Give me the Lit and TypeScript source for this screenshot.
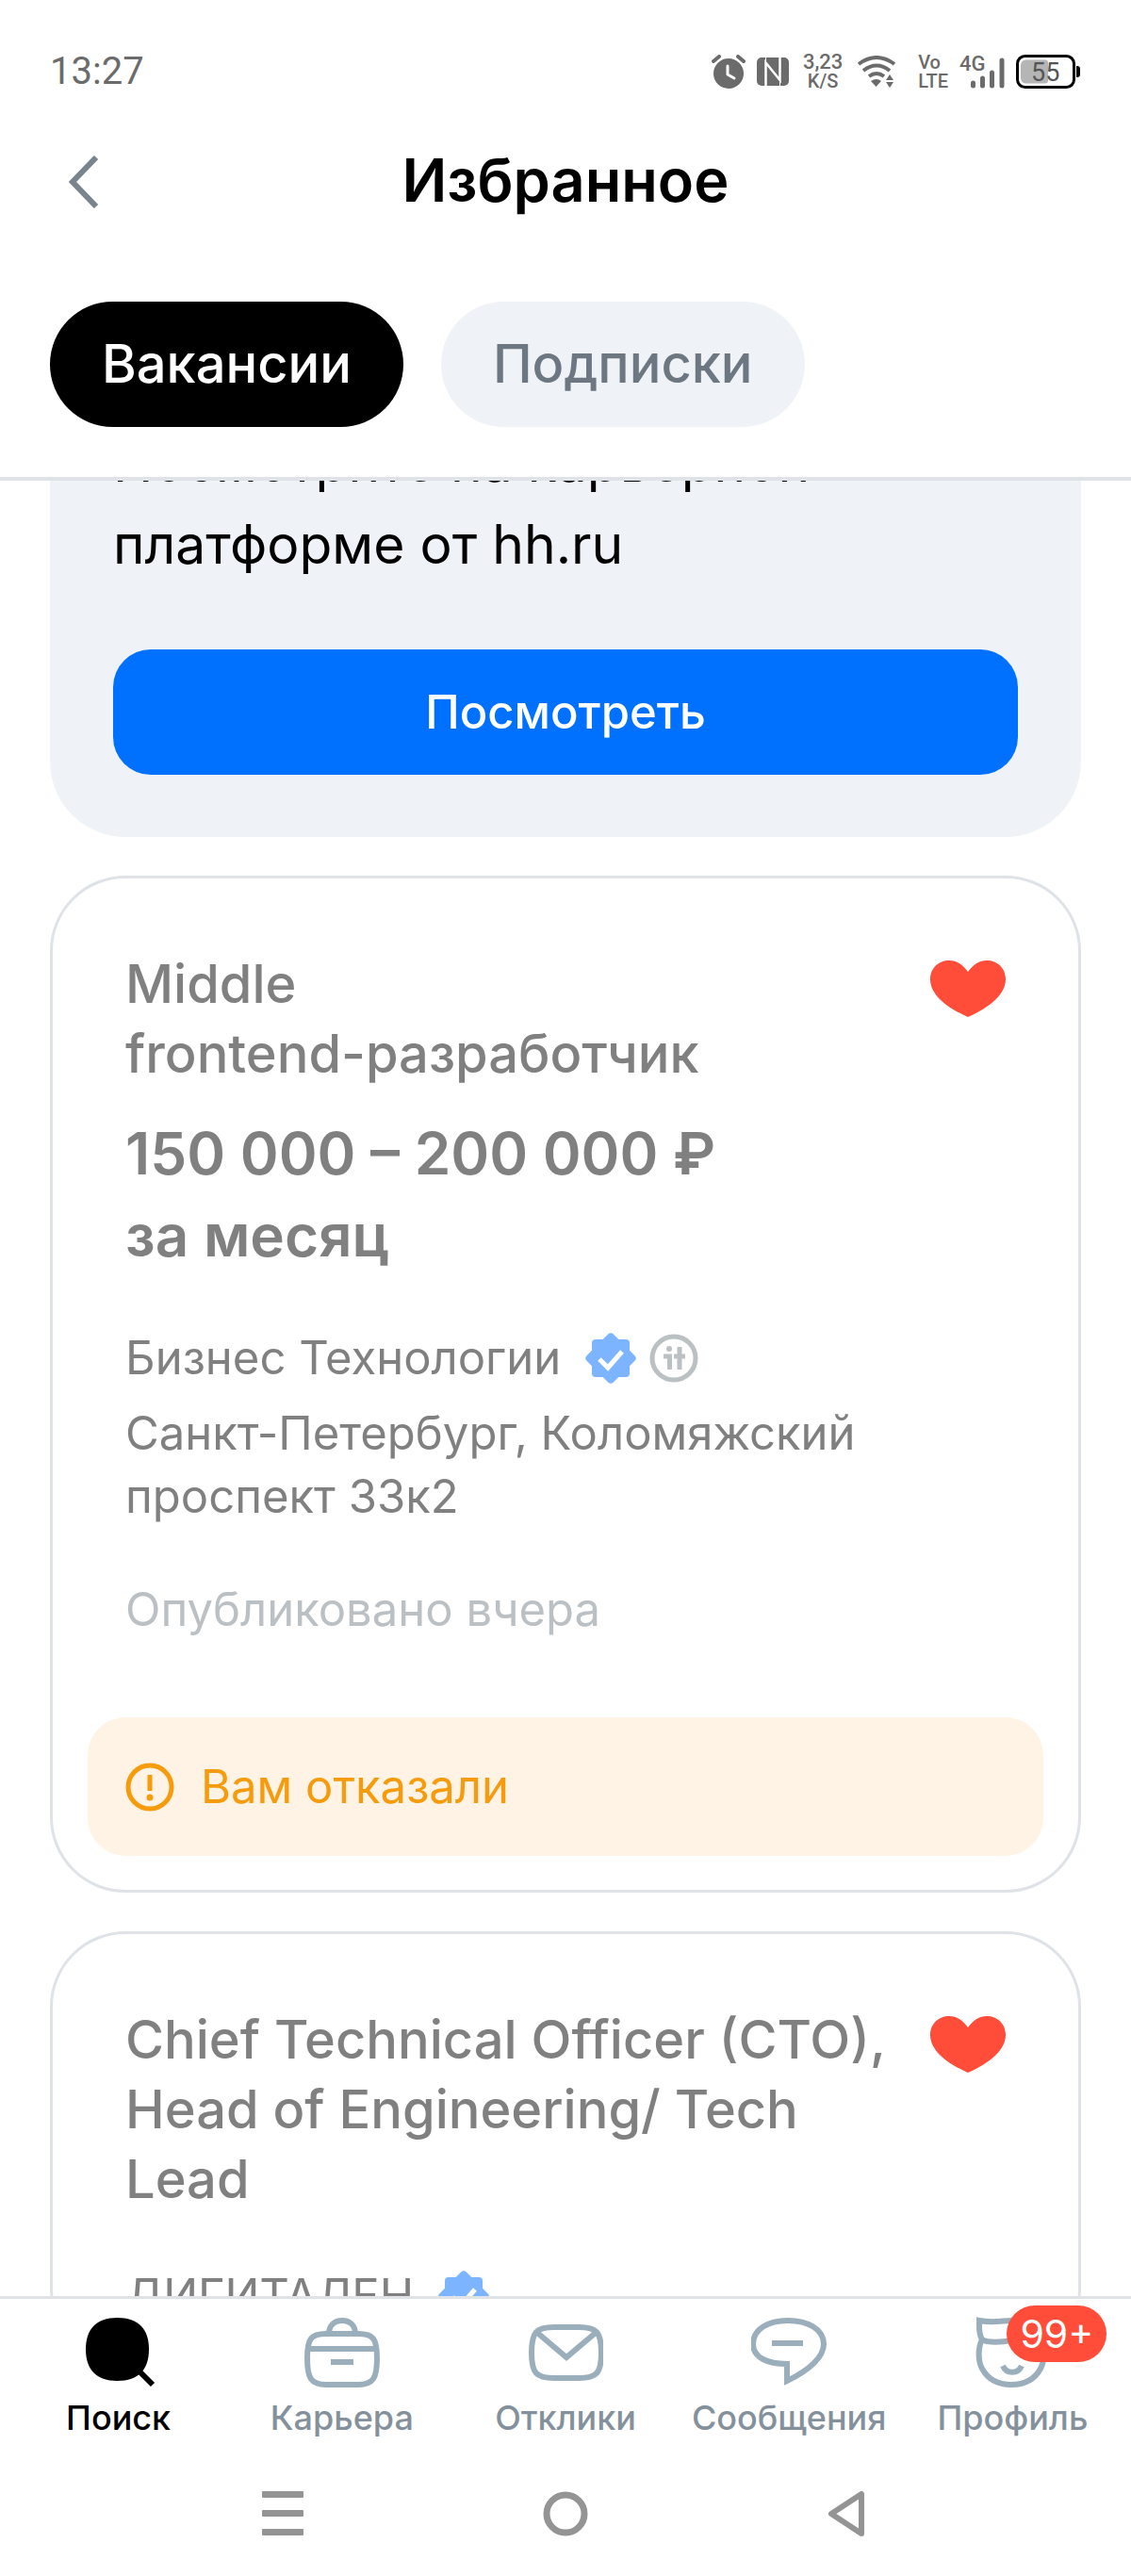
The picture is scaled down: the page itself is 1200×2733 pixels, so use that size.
import { LitElement, html, css, svg, nothing } from "lit";
import { customElement, property, state } from "lit/decorators.js";
import { classMap } from "lit/directives/class-map.js";

interface Vacancy {
  id: number;
  title: string;
  salary?: string;
  company: string;
  accredited: boolean;
  address?: string;
  published?: string;
  notice?: string;
}

const vacancies: Vacancy[] = [
  {
    id: 1,
    title: "Middle\nfrontend-разработчик",
    salary: "150 000 – 200 000 ₽\nза месяц",
    company: "Бизнес Технологии",
    accredited: true,
    address: "Санкт-Петербург, Коломяжский проспект 33к2",
    published: "Опубликовано вчера",
    notice: "Вам отказали",
  },
  {
    id: 2,
    title: "Chief Technical Officer (CTO), Head of Engineering/ Tech Lead",
    company: "ДИГИТАЛЕН",
    accredited: false,
  },
];

@customElement("status-bar")
export class StatusBar extends LitElement {
  static styles = css`
    :host {
      display: flex;
      align-items: center;
      justify-content: space-between;
      height: 151px;
      padding: 0 53px;
      box-sizing: border-box;
      color: #6b6b6b;
      font-family: Roboto, sans-serif;
    }
    .time {
      font-size: 40px;
      line-height: 48px;
    }
    .icons {
      display: flex;
      align-items: center;
      gap: 12px;
    }
    .icons svg {
      display: block;
    }
    .pair {
      display: flex;
      flex-direction: column;
      font-size: 20px;
      line-height: 20px;
      font-weight: 500;
    }
    .speed {
      width: 48px;
      align-items: center;
    }
    .rate {
      font-size: 22px;
    }
    .volte {
      padding-left: 11px;
    }
    .network {
      font: 500 22px Roboto, sans-serif;
    }
    .charge {
      font: 400 27px Roboto, sans-serif;
    }
  `;

  render() {
    return html`
      <span class="time">13:27</span>
      <div class="icons">
        <svg width="36" height="36" viewBox="0 0 36 36" fill="none" stroke="currentColor" aria-hidden="true">
          <circle cx="18" cy="20" r="16" fill="currentColor" stroke="none" />
          <path d="M2 7 8 2M34 7 28 2" stroke-width="4" stroke-linecap="round" />
          <path d="M17 12v9l7 4" stroke="#fff" stroke-width="3" stroke-linecap="round" stroke-linejoin="round" />
        </svg>
        <svg width="34" height="32" viewBox="0 0 34 32" fill="none" aria-hidden="true">
          <rect y="1" width="34" height="30" rx="5" fill="currentColor" />
          <path d="M9.500 27V6.500L24.500 25V1M9.500 13V31" stroke="#fff" stroke-width="2.500" />
          <path d="M9.500 1V7L24.500 24V31" stroke="#fff" stroke-width="1" />
        </svg>
        <span class="pair speed"><span class="rate">3,23</span><span>K/S</span></span>
        <svg width="42" height="34" viewBox="0 0 42 34" fill="none" stroke="currentColor" stroke-width="4" aria-hidden="true">
          <path d="M2 9Q21-5 40 9M7 16Q21 5 35 16M13 22Q21 16 29 22" />
          <path d="M15 27q6-4 11 0l-5.500 6z" fill="currentColor" stroke="none" />
          <path d="M31 26l4-6 4 6zM31 28h8l-4 6z" fill="currentColor" stroke="none" />
        </svg>
        <span class="pair volte"><span>Vo</span><span>LTE</span></span>
        <svg width="48" height="36" viewBox="0 0 48 36">
          <text class="network" x="0" y="17" fill="currentColor">4G</text>
          <path d="M14.500 30v3M24.500 25v8M34.500 19v14M45 6v27" fill="none" stroke="currentColor" stroke-width="5" stroke-linecap="round" />
        </svg>
        <svg width="69" height="36" viewBox="0 0 69 36">
          <rect x="1.500" y="1.500" width="60" height="33" rx="8" fill="none" stroke="#000" stroke-width="3" />
          <path d="M11 5.500h20q3 0 3 3v19q0 3-3 3H11q-6 0-6-6v-13q0-6 6-6z" fill="#b5b5b5" />
          <path d="M64 12h1q3 0 3 3v6q0 3-3 3h-1z" />
          <text class="charge" x="16" y="28" fill="#555">55</text>
        </svg>
      </div>
    `;
  }
}

const verifiedIcon = html`<svg width="54" height="54" viewBox="0 0 54 54" fill="#7db4ff" role="img" aria-label="Проверенный работодатель">
  <rect x="7" y="7" width="40" height="40" rx="4" />
  <rect x="7" y="7" width="40" height="40" rx="4" transform="rotate(45 27 27)" />
  <path d="M15 28l9 9 15-17" fill="none" stroke="#fff" stroke-width="5" />
</svg>`;

const accreditedIcon = html`<svg width="52" height="52" viewBox="0 0 52 52" fill="none" stroke="#bbc0c3" role="img" aria-label="Аккредитованная ИТ-компания">
  <circle cx="26" cy="26" r="23" stroke-width="5" />
  <circle cx="21" cy="16" r="3" fill="#bbc0c3" stroke="none" />
  <path d="M15 24h6.500v14M32 14v24M26 24h12" stroke-width="5" />
</svg>`;

@customElement("vacancy-card")
export class VacancyCard extends LitElement {
  @property({ attribute: false }) vacancy!: Vacancy;

  static styles = css`
    :host {
      display: block;
      flex: none;
    }
    .card {
      border: 3px solid #dfe3e7;
      border-radius: 80px;
      padding: 75px 37px 36px;
    }
    .body {
      padding: 0 40px;
    }
    .head {
      display: flex;
      align-items: flex-start;
      justify-content: space-between;
      gap: 24px;
    }
    h2,
    p {
      margin: 0;
    }
    h2 {
      font-size: 56px;
      line-height: 74px;
      font-weight: 500;
      color: #808080;
      white-space: pre-line;
    }
    .like {
      flex: none;
      margin-top: 12px;
      padding: 0;
      border: 0;
      background: none;
      cursor: pointer;
    }
    .like svg {
      display: block;
    }
    .salary {
      margin-top: 25px;
      font-size: 62px;
      line-height: 87px;
      font-weight: 600;
      color: #808080;
      white-space: pre-line;
    }
    .company {
      display: flex;
      align-items: center;
      gap: 14px;
      margin-top: 53px;
    }
    .name {
      margin-right: 12px;
    }
    .company,
    .address {
      font-size: 49px;
      line-height: 67px;
      color: #808080;
    }
    .address {
      margin-top: 13px;
    }
    .published {
      margin-top: 53px;
      font-size: 49px;
      line-height: 67px;
      color: #bbc0c4;
    }
    .notice {
      display: flex;
      align-items: center;
      gap: 28px;
      margin-top: 81px;
      padding: 40px;
      border-radius: 40px;
      background: #fff3e6;
      color: #f59b0c;
      font-size: 49px;
      line-height: 67px;
    }
  `;

  render() {
    const v = this.vacancy;
    return html`
      <article class="card">
        <div class="body">
          <div class="head">
            <h2>${v.title}</h2>
            <button class="like" type="button" aria-label="Убрать из избранного" aria-pressed="true">
              <svg width="80" height="60" viewBox="0 0 80 60" fill="#ff4d3a">
                <path d="M40 12C34 4 28 0 20 0C9 0 0 8 0 20C0 35 15 49 40 60C65 49 80 35 80 20C80 8 71 0 60 0C52 0 46 4 40 12Z" />
              </svg>
            </button>
          </div>
          ${v.salary ? html`<p class="salary">${v.salary}</p>` : nothing}
          <div class="company">
            <span class="name">${v.company}</span>${verifiedIcon}${v.accredited ? accreditedIcon : nothing}
          </div>
          ${v.address ? html`<p class="address">${v.address}</p>` : nothing}
          ${v.published ? html`<p class="published">${v.published}</p>` : nothing}
        </div>
        ${v.notice
          ? html`<div class="notice">
              <svg width="52" height="52" viewBox="0 0 52 52" fill="none" stroke="currentColor" aria-hidden="true">
                <circle cx="26" cy="26" r="23" stroke-width="5" />
                <path d="M26 13v17" stroke-width="5" />
                <circle cx="26" cy="37" r="3.500" fill="currentColor" stroke="none" />
              </svg>
              <span>${v.notice}</span>
            </div>`
          : nothing}
      </article>
    `;
  }
}

const navItems = [
  {
    label: "Поиск",
    icon: svg`<path d="M38.500 3C61 3 72 15 72 36.500S61 70 38.500 70S5 58 5 36.500S16 3 38.500 3Z" fill="currentColor" stroke="none"/><path d="M58 56 76 74"/>`,
  },
  {
    label: "Карьера",
    icon: svg`<path d="M3 46C3 25 7 20 23 20H57C73 20 77 25 77 46S73 74 57 74H23C7 74 3 67 3 46ZM3 36H77M28 50H52M26 20C26 11 32 6 40 6S54 11 54 20"/>`,
  },
  {
    label: "Отклики",
    icon: svg`<path d="M4 40C4 18 9 13 28 13H54C73 13 78 18 78 40S73 67 54 67H28C9 67 4 62 4 40ZM9 18 41 45 73 18"/>`,
  },
  {
    label: "Сообщения",
    icon: svg`<path d="M39 6C60 6 77 15 77 31C77 44 63 58 38 70V52C17 52 2 45 2 31C2 15 18 6 39 6ZM22 30H55"/>`,
  },
  {
    label: "Профиль",
    badge: "99+",
    icon: svg`<path d="M8 26C4 20 5 12 5 6C20 9 30 6 39 6S58 9 73 6C73 12 74 20 70 26M8 26C14 30 30 29 39 27S64 30 70 26M8 26C3 36 4 50 8 57C14 68 25 74 39 74S64 68 70 57C74 50 75 36 70 26M30 54C34 63 46 63 50 54"/>`,
  },
];

@customElement("app-root")
export class AppRoot extends LitElement {
  @state() private tab = "Вакансии";

  static styles = css`
    :host {
      display: flex;
      flex-direction: column;
      height: 100vh;
      background: #fff;
      font-family: Inter, "Liberation Sans", sans-serif;
      color: #000;
    }
    button {
      font-family: inherit;
      border: 0;
      cursor: pointer;
    }
    header {
      flex: none;
      border-bottom: 4px solid #dfe3e7;
    }
    .titlebar {
      display: grid;
      grid-template-columns: 1fr auto 1fr;
      align-items: center;
      padding: 0 53px;
    }
    .back {
      justify-self: start;
      padding: 4px 20px 0;
      background: none;
      color: #79848d;
    }
    .back svg,
    .systembar svg {
      display: block;
    }
    h1 {
      margin: 0;
      font-size: 63px;
      line-height: 80px;
      font-weight: 600;
    }
    .tabs {
      display: flex;
      gap: 40px;
      padding: 89px 53px 53px;
    }
    .tab {
      padding: 0 55px;
      border-radius: 67px;
      background: #eff3f8;
      color: #6c7781;
      font-size: 56px;
      line-height: 133px;
      font-weight: 500;
    }
    .tab.active {
      background: #000;
      color: #fff;
    }
    .feed {
      flex: 1;
      min-height: 0;
      display: flex;
      flex-direction: column;
      gap: 41px;
      padding: 0 53px;
      overflow: hidden;
    }
    .promo {
      flex: none;
      margin-top: -129px;
      padding: 66px 67px;
      border-radius: 80px;
      background: #eff3f8;
    }
    .promo p {
      margin: 0 0 68px;
      font-size: 57px;
      line-height: 87px;
      max-width: 800px;
    }
    .open {
      display: block;
      width: 100%;
      padding: 0;
      border-radius: 40px;
      background: #0070ff;
      color: #fff;
      font-size: 49px;
      line-height: 133px;
      font-weight: 500;
    }
    .tabbar {
      flex: none;
      display: grid;
      grid-template-columns: repeat(5, 1fr);
      padding: 17px 7px 13px;
      border-top: 3px solid #dfe3e7;
    }
    .item {
      display: flex;
      flex-direction: column;
      align-items: center;
      gap: 7px;
      color: #84919c;
      font-size: 36px;
      line-height: 44px;
      font-weight: 500;
      text-decoration: none;
      white-space: nowrap;
    }
    .item.current {
      color: #000;
    }
    .glyph {
      position: relative;
      display: block;
      color: #9baebc;
    }
    .current .glyph {
      color: #000;
    }
    .glyph svg {
      display: block;
    }
    .badge {
      position: absolute;
      left: 34px;
      top: -10px;
      padding: 0 14px;
      border-radius: 30px;
      background: #ff4d3a;
      color: #fff;
      font-size: 41px;
      line-height: 60px;
      font-weight: 400;
    }
    .systembar {
      flex: none;
      display: grid;
      grid-template-columns: repeat(3, 1fr);
      align-items: center;
      justify-items: center;
      height: 133px;
      padding: 0 150px;
    }
    .systembar button {
      padding: 0;
      background: none;
      color: #949494;
    }
  `;

  render() {
    return html`
      <header>
        <status-bar></status-bar>
        <div class="titlebar">
          <button class="back" type="button" aria-label="Назад">
            <svg width="32" height="56" viewBox="0 0 32 56" fill="none" stroke="currentColor" stroke-width="6">
              <path d="M29 2 4 28 29 54" />
            </svg>
          </button>
          <h1>Избранное</h1>
        </div>
        <div class="tabs">
          ${["Вакансии", "Подписки"].map(
            (name) => html`<button
              type="button"
              class=${classMap({ tab: true, active: this.tab === name })}
              @click=${() => (this.tab = name)}
            >${name}</button>`
          )}
        </div>
      </header>
      <main class="feed">
        <section class="promo">
          <p>Посмотрите на карьерной платформе от hh.ru</p>
          <button class="open" type="button">Посмотреть</button>
        </section>
        ${vacancies.map((v) => html`<vacancy-card .vacancy=${v}></vacancy-card>`)}
      </main>
      <nav class="tabbar">
        ${navItems.map(
          (item, i) => html`<a href="#" class=${classMap({ item: true, current: i === 0 })}>
            <span class="glyph">
              <svg width="80" height="80" viewBox="0 0 80 80" fill="none" stroke="currentColor" stroke-width="6" aria-hidden="true">${item.icon}</svg>
              ${item.badge ? html`<span class="badge">${item.badge}</span>` : nothing}
            </span>
            <span>${item.label}</span>
          </a>`
        )}
      </nav>
      <div class="systembar">
        <button type="button" aria-label="Недавние приложения">
          <svg width="48" height="48" viewBox="0 0 48 48" fill="currentColor">
            <rect x="2" y="0" width="44" height="7" rx="1" />
            <rect x="2" y="20" width="44" height="7" rx="1" />
            <rect x="2" y="40" width="44" height="7" rx="1" />
          </svg>
        </button>
        <button type="button" aria-label="Домой">
          <svg width="48" height="48" viewBox="0 0 48 48" fill="none" stroke="currentColor" stroke-width="7">
            <circle cx="24" cy="24" r="20" />
          </svg>
        </button>
        <button type="button" aria-label="Назад">
          <svg width="44" height="52" viewBox="0 0 44 52" fill="none" stroke="currentColor" stroke-width="6" stroke-linejoin="round">
            <path d="M36 5V47L4 26Z" />
          </svg>
        </button>
      </div>
    `;
  }
}
